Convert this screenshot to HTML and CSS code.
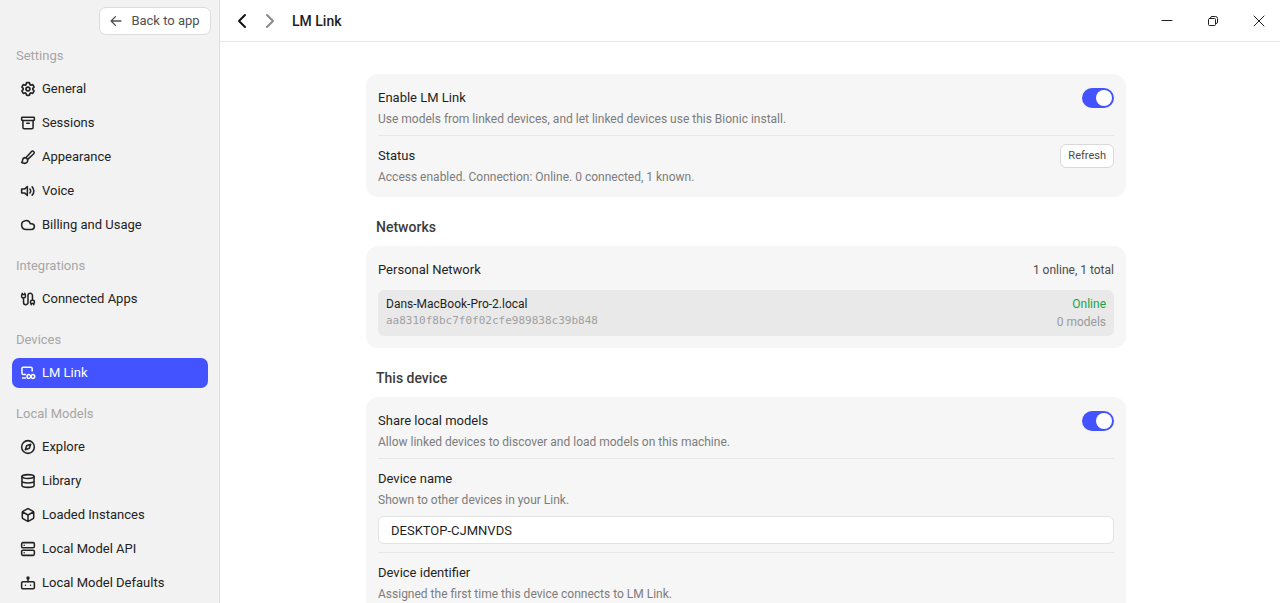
FILE: index.html
```html
<!DOCTYPE html>
<html lang="en">
  <head>
    <meta charset="UTF-8" />
    <meta name="viewport" content="width=device-width, initial-scale=1.0" />
    <title>LM Link - Settings</title>
    <link rel="stylesheet" href="styles.css">
  </head>
  <body>
    <aside class="sidebar">
      <button class="back" type="button">
        <svg class="icon" viewBox="1 1 22 22"><path d="M21 12H3M11 4l-8 8 8 8" /></svg>
        Back to app
      </button>

      <nav>
        <h2>Settings</h2>
        <a href="#general">
          <svg class="icon" viewBox="2 2 20 20"><path d="M9.594 3.94c.09-.542.56-.94 1.11-.94h2.593c.55 0 1.02.398 1.11.94l.213 1.281c.063.374.313.686.645.87.074.04.147.083.22.127.325.196.72.257 1.075.124l1.217-.456a1.125 1.125 0 0 1 1.37.49l1.296 2.247a1.125 1.125 0 0 1-.26 1.431l-1.003.827c-.293.241-.438.613-.43.992a7.723 7.723 0 0 1 0 .255c-.008.378.137.75.43.991l1.004.827c.424.35.534.955.26 1.43l-1.298 2.247a1.125 1.125 0 0 1-1.369.491l-1.217-.456c-.355-.133-.75-.072-1.076.124a6.47 6.47 0 0 1-.22.128c-.331.183-.581.495-.644.869l-.213 1.281c-.09.543-.56.94-1.11.94h-2.594c-.55 0-1.019-.398-1.11-.94l-.213-1.281c-.062-.374-.312-.686-.644-.87a6.52 6.52 0 0 1-.22-.127c-.325-.196-.72-.257-1.076-.124l-1.217.456a1.125 1.125 0 0 1-1.369-.49l-1.297-2.247a1.125 1.125 0 0 1 .26-1.431l1.004-.827c.292-.24.437-.613.43-.991a6.932 6.932 0 0 1 0-.255c.007-.38-.138-.751-.43-.992l-1.004-.827a1.125 1.125 0 0 1-.26-1.43l1.297-2.247a1.125 1.125 0 0 1 1.37-.491l1.216.456c.356.133.751.072 1.076-.124.072-.044.146-.086.22-.128.332-.183.582-.495.644-.869l.214-1.28Z" /><circle cx="12" cy="12" r="2.8" /></svg>
          General
        </a>
        <a href="#sessions">
          <svg class="icon" viewBox="1 1 22 22"><rect x="2" y="3" width="20" height="5" rx="1" /><path d="M4 8v11a2 2 0 0 0 2 2h12a2 2 0 0 0 2-2V8M10 12.500h4" /></svg>
          Sessions
        </a>
        <a href="#appearance">
          <svg class="icon" viewBox="1 1 22 22"><path d="M9.500 12.500 17.500 3.500a2.300 2.300 0 0 1 3.500 3.300l-9 8.500" /><path d="M7.500 13a4 4 0 0 0-4 4c0 1.800-.6 2.700-1.500 3.500 1 .9 2.700 1.500 5 1.500a4.500 4.500 0 0 0 0-9Z" /></svg>
          Appearance
        </a>
        <a href="#voice">
          <svg class="icon" viewBox="1 1 22 22"><path d="M11 5 6.500 9H2v6h4.500l4.500 4Z" /><path d="M15 9a4.200 4.200 0 0 1 0 6M18.500 5.500a9.200 9.200 0 0 1 0 13" /></svg>
          Voice
        </a>
        <a href="#billing">
          <svg class="icon" viewBox="1 1 22 22"><path d="M17.500 19H9a7 7 0 1 1 6.710-9h1.790a4.500 4.500 0 1 1 0 9Z" /></svg>
          Billing and Usage
        </a>

        <h2>Integrations</h2>
        <a href="#apps">
          <svg class="icon" viewBox="1 1 22 22"><path d="M17 19a1 1 0 0 1-1-1v-2a2 2 0 0 1 2-2h2a2 2 0 0 1 2 2v2a1 1 0 0 1-1 1zM17 21v-2M19 14V6.500a1 1 0 0 0-7 0v11a1 1 0 0 1-7 0V10M21 21v-2M3 5V3M4 10a2 2 0 0 1-2-2V6a1 1 0 0 1 1-1h4a1 1 0 0 1 1 1v2a2 2 0 0 1-2 2zM7 5V3" /></svg>
          Connected Apps
        </a>

        <h2>Devices</h2>
        <a class="active" href="#link">
          <svg class="icon" viewBox="1 1 22 22"><path d="M18.500 9V5a2 2 0 0 0-2-2H4.500a2 2 0 0 0-2 2v7.500a2 2 0 0 0 2 2H8M3.500 20H8" /><path d="M16.500 17c-1-1.600-1.800-2.500-3-2.500a3 3 0 0 0 0 6c3 0 3.500-6 6-6a3 3 0 0 1 0 6c-1.200 0-2-1.200-3-3.500Z" /></svg>
          LM Link
        </a>

        <h2>Local Models</h2>
        <a href="#explore">
          <svg class="icon" viewBox="1 1 22 22"><circle cx="12" cy="12" r="10" /><path d="m16.200 7.800-2.100 6.300-6.300 2.100 2.100-6.300Z" /></svg>
          Explore
        </a>
        <a href="#library">
          <svg class="icon" viewBox="1 1 22 22"><ellipse cx="12" cy="5" rx="9.500" ry="3" /><path d="M2.500 5v14c0 1.700 4 3 9.500 3s9.500-1.300 9.500-3V5M2.500 12c0 1.700 4 3 9.500 3s9.500-1.300 9.500-3" /></svg>
          Library
        </a>
        <a href="#instances">
          <svg class="icon" viewBox="1 1 22 22"><path d="M21 8a2 2 0 0 0-1-1.730l-7-4a2 2 0 0 0-2 0l-7 4A2 2 0 0 0 3 8v8a2 2 0 0 0 1 1.730l7 4a2 2 0 0 0 2 0l7-4A2 2 0 0 0 21 16ZM3.300 7l8.700 5 8.700-5M12 22V12" /></svg>
          Loaded Instances
        </a>
        <a href="#api">
          <svg class="icon" viewBox="1 1 22 22"><rect x="2" y="2" width="20" height="8" rx="2" /><rect x="2" y="14" width="20" height="8" rx="2" /><path d="M6 6h.01M6 18h.01" /></svg>
          Local Model API
        </a>
        <a href="#defaults">
          <svg class="icon" viewBox="1 1 22 22"><rect x="2" y="10" width="20" height="11" rx="2" /><circle cx="12" cy="4" r="1.500" /><path d="M12 6v4M8 15.500v.01M16 15.500v.01" /></svg>
          Local Model Defaults
        </a>
      </nav>
    </aside>

    <div class="page">
      <header>
        <button class="nav-btn" type="button" aria-label="Back">
          <svg viewBox="0 0 16 16"><path d="M11 2 5 8l6 6" /></svg>
        </button>
        <button class="nav-btn forward" type="button" aria-label="Forward">
          <svg viewBox="0 0 16 16"><path d="m5 2 6 6-6 6" /></svg>
        </button>
        <h1>LM Link</h1>
        <div class="window-controls">
          <button type="button" aria-label="Minimize">
            <svg viewBox="0 0 12 12"><path d="M1 5.500h10" /></svg>
          </button>
          <button type="button" aria-label="Restore">
            <svg viewBox="0 0 12 12"><rect x="1.500" y="3.500" width="7" height="7" rx="1" /><path d="M3.500 3.500v-.5a1.500 1.500 0 0 1 1.500-1.500h3.500a2 2 0 0 1 2 2V7a1.500 1.500 0 0 1-1.500 1.500h-.5" /></svg>
          </button>
          <button type="button" aria-label="Close">
            <svg viewBox="0 0 12 12"><path d="m1 1 10 10M11 1 1 11" /></svg>
          </button>
        </div>
      </header>

      <main>
        <div class="content">
          <section class="card">
            <div class="row">
              <div>
                <label class="title" for="enable">Enable LM Link</label>
                <p>Use models from linked devices, and let linked devices use this Bionic install.</p>
              </div>
              <input class="switch" type="checkbox" id="enable" checked />
            </div>
            <div class="row">
              <div>
                <h3 class="title">Status</h3>
                <p>Access enabled. Connection: Online. 0 connected, 1 known.</p>
              </div>
              <button class="refresh" type="button">Refresh</button>
            </div>
          </section>

          <h2>Networks</h2>
          <section class="card network">
            <div class="network-head">
              <h3 class="title">Personal Network</h3>
              <span>1 online, 1 total</span>
            </div>
            <div class="device">
              <div>
                <div class="device-name">Dans-MacBook-Pro-2.local</div>
                <div class="device-id">aa8310f8bc7f0f02cfe989838c39b848</div>
              </div>
              <div class="device-status">
                <div class="online">Online</div>
                <div class="models">0 models</div>
              </div>
            </div>
          </section>

          <h2>This device</h2>
          <section class="card">
            <div class="row">
              <div>
                <label class="title" for="share">Share local models</label>
                <p>Allow linked devices to discover and load models on this machine.</p>
              </div>
              <input class="switch" type="checkbox" id="share" checked />
            </div>
            <div class="row field">
              <label class="title" for="name">Device name</label>
              <p>Shown to other devices in your Link.</p>
              <input class="text" type="text" id="name" value="DESKTOP-CJMNVDS" />
            </div>
            <div class="row">
              <div>
                <h3 class="title">Device identifier</h3>
                <p>Assigned the first time this device connects to LM Link.</p>
              </div>
            </div>
          </section>
        </div>
      </main>
    </div>
  </body>
</html>
```
FILE: styles.css
```css
* {
  box-sizing: border-box;
}
body {
  display: flex;
  height: 100vh;
  margin: 0;
  overflow: hidden;
  background: #fff;
  color: #1f1f1f;
  font-family: "Segoe UI", Roboto, sans-serif;
  font-size: 13px;
  line-height: 20px;
}
h1,
h2,
h3,
p {
  margin: 0;
}
button,
input {
  font: inherit;
  color: inherit;
}
button {
  padding: 0;
  border: none;
  background: none;
}
svg {
  fill: none;
  stroke: currentColor;
  stroke-linecap: round;
  stroke-linejoin: round;
}
.icon {
  flex: none;
  width: 14px;
  height: 14px;
  overflow: visible;
  stroke-width: 2.4;
}

/* sidebar */
.sidebar {
  display: flex;
  flex: none;
  flex-direction: column;
  width: 220px;
  padding: 7px 8px 0 12px;
  overflow: hidden;
  border-right: 1px solid #dedede;
  background: #f2f2f2;
}
.back {
  display: flex;
  flex: none;
  align-items: center;
  justify-content: center;
  align-self: flex-end;
  gap: 9px;
  width: 112px;
  height: 28px;
  border: 1px solid #dcdcdc;
  border-radius: 7px;
  background: #fff;
  color: #505050;
}
.back .icon {
  width: 12px;
  height: 12px;
}
nav {
  display: flex;
  flex-direction: column;
  gap: 4px;
  padding: 11px 3px 0 0;
}
nav h2 {
  padding: 0 4px;
  margin-bottom: 4px;
  color: #a6a6a6;
  font-size: 13px;
  font-weight: normal;
}
nav a + h2 {
  margin-top: 12px;
}
nav a {
  display: flex;
  flex: none;
  align-items: center;
  gap: 7px;
  height: 30px;
  padding: 0 9px;
  border-radius: 7px;
  color: #222;
  text-decoration: none;
}
nav .active {
  background: #4353ff;
  color: #fff;
}

/* title bar */
.page {
  display: flex;
  flex: 1;
  flex-direction: column;
  min-width: 0;
}
header {
  display: flex;
  flex: none;
  align-items: center;
  height: 42px;
  padding-left: 8px;
  border-bottom: 1px solid #e6e6e6;
}
.nav-btn {
  width: 28px;
  height: 28px;
  color: #111;
}
.nav-btn svg {
  display: block;
  width: 16px;
  height: 16px;
  margin: auto;
  stroke-width: 2;
}
.forward {
  color: #8a8a8a;
}
h1 {
  padding-left: 8px;
  font-size: 14px;
  font-weight: 500;
}
.window-controls {
  display: flex;
  gap: 4px;
  margin-left: auto;
}
.window-controls button {
  width: 42px;
  height: 40px;
}
.window-controls svg {
  display: block;
  width: 12px;
  height: 12px;
  margin: auto;
}

/* settings */
main {
  flex: 1;
  padding: 32px 8px 32px 0;
  overflow: hidden;
}
.content {
  max-width: 760px;
  margin: 0 auto;
}
.content h2 {
  margin: 18px 10px 7px;
  color: #3c3c3c;
  font-size: 14px;
  font-weight: 500;
  line-height: 24px;
}
.card {
  padding: 4px 12px;
  border-radius: 12px;
  background: #f6f6f6;
}
.row {
  display: flex;
  align-items: flex-start;
  justify-content: space-between;
  padding: 10px 0 6px;
}
.row + .row {
  border-top: 1px solid #e7e7e7;
}
.title {
  display: block;
  font-size: 13px;
  font-weight: normal;
}
.row p {
  margin-top: 1px;
  color: #7c7c7c;
  font-size: 12px;
}
.switch {
  flex: none;
  width: 32px;
  height: 20px;
  margin: 0;
  padding: 2px;
  border-radius: 10px;
  background: #c4c4c4;
  appearance: none;
}
.switch::before {
  display: block;
  width: 16px;
  height: 16px;
  border-radius: 50%;
  background: #fff;
  content: "";
}
.switch:checked {
  background: #4353ff;
}
.switch:checked::before {
  margin-left: auto;
}
.refresh {
  height: 24px;
  margin-top: -2px;
  padding: 0 7px;
  border: 1px solid #d9d9d9;
  border-radius: 6px;
  background: #fff;
  color: #4a4a4a;
  font-size: 11px;
}
.field {
  flex-direction: column;
  align-items: stretch;
  padding-bottom: 8px;
}
.text {
  width: 100%;
  height: 28px;
  margin-top: 6px;
  padding: 0 12px;
  border: 1px solid #e2e2e2;
  border-radius: 6px;
  background: #fff;
}

/* networks */
.network {
  padding: 14px 12px 12px;
}
.network-head {
  display: flex;
  justify-content: space-between;
  margin-bottom: 10px;
}
.network-head span {
  color: #4a4a4a;
  font-size: 12px;
}
.device {
  display: flex;
  justify-content: space-between;
  padding: 5px 8px;
  border-radius: 6px;
  background: #e9e9e9;
  font-size: 12px;
  line-height: 18px;
}
.device-id {
  color: #a0a0a0;
  font-family: "DejaVu Sans Mono", monospace;
  font-size: 11px;
  line-height: 16px;
}
.device-status {
  text-align: right;
}
.online {
  color: #16a34a;
}
.models {
  color: #9a9a9a;
}
```
